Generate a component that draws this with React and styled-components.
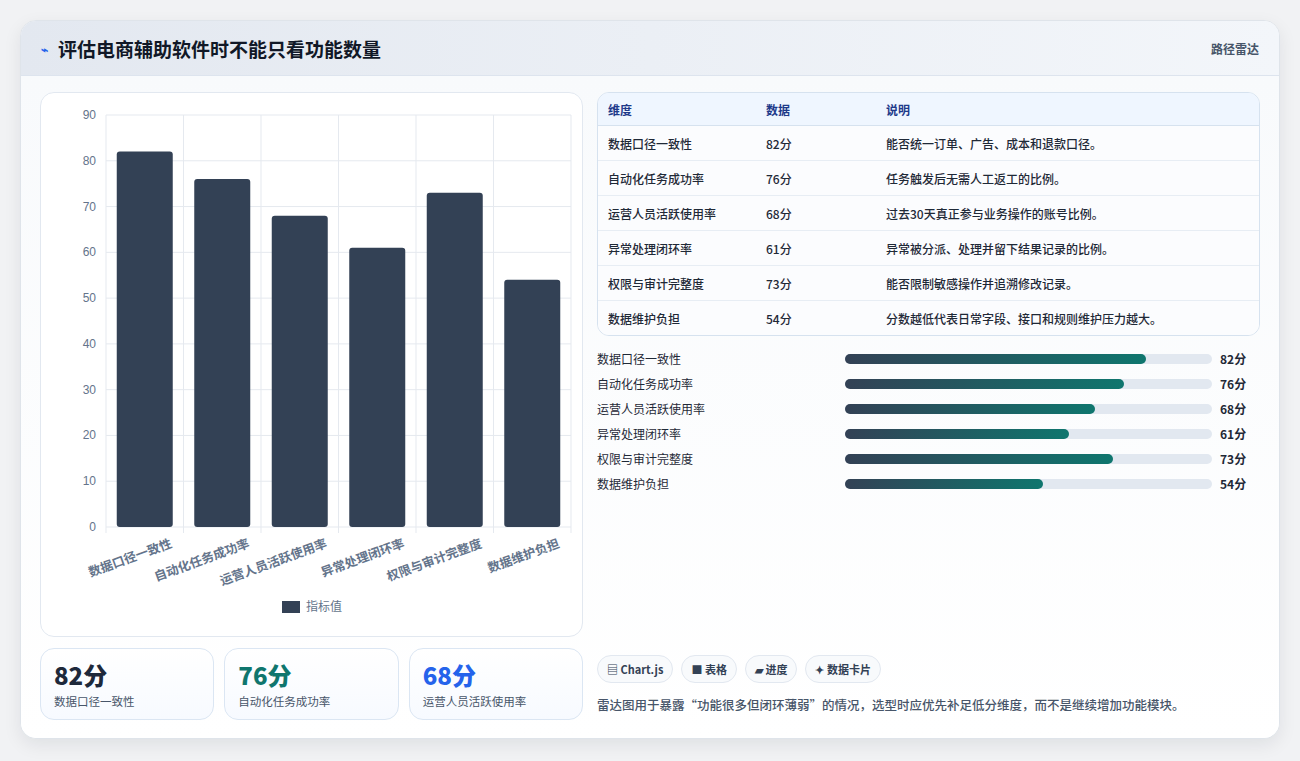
import styled, { createGlobalStyle } from 'styled-components';

const Global = createGlobalStyle`
  body { margin: 0; background: #f1f2f4; font-family: "Noto Sans CJK SC", "Noto Sans", sans-serif; }
`;

const data = [
  { name: '数据口径一致性', v: 82, note: '能否统一订单、广告、成本和退款口径。' },
  { name: '自动化任务成功率', v: 76, note: '任务触发后无需人工返工的比例。' },
  { name: '运营人员活跃使用率', v: 68, note: '过去30天真正参与业务操作的账号比例。' },
  { name: '异常处理闭环率', v: 61, note: '异常被分派、处理并留下结果记录的比例。' },
  { name: '权限与审计完整度', v: 73, note: '能否限制敏感操作并追溯修改记录。' },
  { name: '数据维护负担', v: 54, note: '分数越低代表日常字段、接口和规则维护压力越大。' },
];

const Page = styled.div`
  padding: 20px 20px 22px;
`;
const Card = styled.div`
  background: #fff;
  border: 1px solid #dfe4ea;
  border-radius: 16px;
  box-shadow: 0 6px 18px rgba(15, 23, 42, 0.08);
  overflow: hidden;
  height: 717px;
  display: flex;
  flex-direction: column;
`;
const Header = styled.div`
  height: 55px;
  padding: 0 20px;
  display: flex;
  align-items: center;
  justify-content: space-between;
  background: linear-gradient(90deg, #e3e8f0, #f3f6fa);
  border-bottom: 1px solid #dde4ee;
`;
const Title = styled.h1`
  margin: 0;
  font-size: 19px;
  font-weight: 700;
  color: #111827;
  display: flex;
  align-items: center;
  gap: 10px;
`;
const Tag = styled.span`
  font-size: 12px;
  color: #475569;
  font-weight: 600;
`;
const Body = styled.div`
  flex: 1;
  padding: 16px 19px 18px;
  display: grid;
  grid-template-columns: 543px 1fr;
  gap: 14px;
  background: linear-gradient(180deg, #f8fafc, #ffffff);
`;
const Col = styled.div`
  display: flex;
  flex-direction: column;
  gap: 11px;
  min-height: 0;
`;
const ChartPanel = styled.div`
  height: 543px;
  background: #fff;
  border: 1px solid #e2e8f0;
  border-radius: 14px;
`;
const Stats = styled.div`
  display: grid;
  grid-template-columns: repeat(3, 1fr);
  gap: 10px;
`;
const Stat = styled.div`
  height: 72px;
  box-sizing: border-box;
  border: 1px solid #dbe6f3;
  border-radius: 14px;
  background: linear-gradient(180deg, #fff, #f7faff);
  padding: 10px 13px;
`;
const StatNum = styled.div`
  font-size: 24px;
  font-weight: 800;
  line-height: 32px;
  color: ${p => p.$c};
`;
const StatLabel = styled.div`
  font-size: 11.5px;
  color: #475569;
  margin-top: 2px;
`;
const Table = styled.table`
  width: 100%;
  border-collapse: separate;
  border-spacing: 0;
  border: 1px solid #d6e2ef;
  border-radius: 12px;
  overflow: hidden;
  font-size: 12px;
  th { background: #eff6ff; color: #1e3a8a; text-align: left; font-weight: 700; height: 32px; padding: 0 10px; border-bottom: 1px solid #d6e2ef; }
  td { height: 34px; padding: 0 10px; color: #1f2937; font-weight: 500; border-bottom: 1px solid #e7edf4; background: #fbfcfe; }
  tr:last-child td { border-bottom: none; }
`;
const Bars = styled.div`
  display: flex;
  flex-direction: column;
  gap: 8px;
  padding-top: 3px;
`;
const BarRow = styled.div`
  display: grid;
  grid-template-columns: 248px 1fr 40px;
  align-items: center;
  font-size: 12px;
  color: #1f2937;
  height: 17px;
`;
const Track = styled.div`
  height: 10px;
  background: #e2e8f0;
  border-radius: 5px;
  margin-right: 8px;
`;
const Fill = styled.div`
  height: 100%;
  border-radius: 5px;
  background: linear-gradient(90deg, #334155, #0f766e);
`;
const Val = styled.span`
  font-weight: 700;
`;
const Footer = styled.div`
  margin-top: auto;
  display: flex;
  flex-direction: column;
  gap: 12px;
`;
const Chips = styled.div`
  display: flex;
  gap: 8px;
`;
const Chip = styled.span`
  font-size: 11px;
  font-weight: 700;
  color: #334155;
  border: 1px solid #e2e8f0;
  background: #f8fafc;
  border-radius: 14px;
  padding: 5px 9px;
`;
const Note = styled.p`
  margin: 0 0 6px;
  font-size: 12.5px;
  color: #475569;
  font-weight: 500;
`;

function Chart() {
  const x0 = 65, x1 = 530, y0 = 434, yTop = 22;
  const step = (y0 - yTop) / 9;
  const cw = (x1 - x0) / 6;
  return (
    <svg width="543" height="543">
      {Array.from({ length: 10 }, (_, i) => (
        <g key={i}>
          <line x1={x0} x2={x1} y1={y0 - i * step} y2={y0 - i * step} stroke="#e5e9ef" />
          <text x={x0 - 10} y={y0 - i * step + 4} textAnchor="end" fontSize="12" fill="#64748b" fontFamily="Liberation Sans">{i * 10}</text>
        </g>
      ))}
      {Array.from({ length: 7 }, (_, i) => (
        <line key={i} x1={x0 + i * cw} x2={x0 + i * cw} y1={yTop} y2={y0 + 6} stroke="#e5e9ef" />
      ))}
      {data.map((d, i) => {
        const h = d.v / 10 * step;
        const cx = x0 + cw * (i + 0.5);
        return (
          <g key={d.name}>
            <rect x={cx - 28} y={y0 - h} width="56" height={h} rx="3" fill="#334155" />
            <text transform={`translate(${cx + 28},${y0 + 20}) rotate(-20)`} textAnchor="end" fontSize="12.5" fontWeight="700" fill="#64748b">{d.name}</text>
          </g>
        );
      })}
      <rect x="241" y="508" width="18" height="12" fill="#334155" />
      <text x="265" y="518" fontSize="12" fill="#64748b">指标值</text>
    </svg>
  );
}

export default function App() {
  return (
    <Page>
      <Global />
      <Card>
        <Header>
          <Title><span style={{ color: '#2563eb', fontSize: 12 }}>⌁</span>评估电商辅助软件时不能只看功能数量</Title>
          <Tag>路径雷达</Tag>
        </Header>
        <Body>
          <Col>
            <ChartPanel><Chart /></ChartPanel>
            <Stats>
              <Stat><StatNum $c="#1e293b">82分</StatNum><StatLabel>数据口径一致性</StatLabel></Stat>
              <Stat><StatNum $c="#0f766e">76分</StatNum><StatLabel>自动化任务成功率</StatLabel></Stat>
              <Stat><StatNum $c="#2563eb">68分</StatNum><StatLabel>运营人员活跃使用率</StatLabel></Stat>
            </Stats>
          </Col>
          <Col>
            <Table>
              <thead><tr><th style={{ width: 138 }}>维度</th><th style={{ width: 100 }}>数据</th><th>说明</th></tr></thead>
              <tbody>
                {data.map(d => (
                  <tr key={d.name}><td>{d.name}</td><td>{d.v}分</td><td>{d.note}</td></tr>
                ))}
              </tbody>
            </Table>
            <Bars>
              {data.map(d => (
                <BarRow key={d.name}>
                  <span>{d.name}</span>
                  <Track><Fill style={{ width: `${d.v}%` }} /></Track>
                  <Val>{d.v}分</Val>
                </BarRow>
              ))}
            </Bars>
            <Footer>
              <Chips>
                <Chip>▤ Chart.js</Chip>
                <Chip>■ 表格</Chip>
                <Chip>▰ 进度</Chip>
                <Chip>✦ 数据卡片</Chip>
              </Chips>
              <Note>雷达图用于暴露“功能很多但闭环薄弱”的情况，选型时应优先补足低分维度，而不是继续增加功能模块。</Note>
            </Footer>
          </Col>
        </Body>
      </Card>
    </Page>
  );
}
